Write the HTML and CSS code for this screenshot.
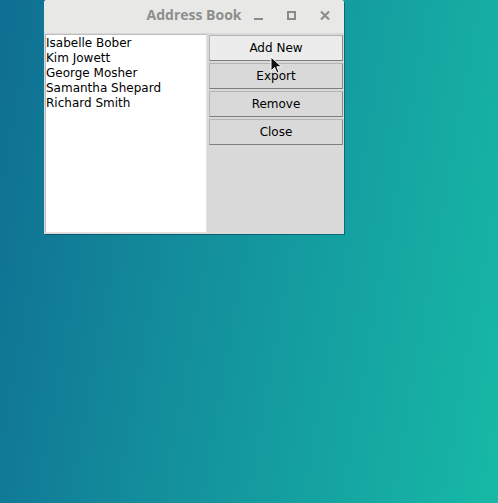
FILE: index.html
```html
<!DOCTYPE html>
<html>
<head>
<meta charset="utf-8">
<link rel="stylesheet" href="styles.css">
</head>
<body>
<div class="desktop">
  <div class="window">
    <div class="titlebar">
      <div></div>
      <div class="title">Address Book</div>
      <div class="controls">
        <svg class="ctl" width="12" height="12" viewBox="0 0 12 12"><rect x="1" y="8" width="9" height="2" fill="#8a8a8a"/></svg>
        <svg class="ctl" width="12" height="12" viewBox="0 0 12 12"><rect x="2" y="2" width="7" height="7" fill="none" stroke="#8a8a8a" stroke-width="2"/></svg>
        <svg class="ctl" width="12" height="12" viewBox="0 0 12 12"><path d="M2 1.5 L10 9.5 M10 1.5 L2 9.5" stroke="#8a8a8a" stroke-width="2"/></svg>
      </div>
    </div>
    <div class="content">
      <ul class="listbox">
        <li>Isabelle Bober</li>
        <li>Kim Jowett</li>
        <li>George Mosher</li>
        <li>Samantha Shepard</li>
        <li>Richard Smith</li>
      </ul>
      <div class="buttons">
        <button class="btn hover">Add New</button>
        <button class="btn">Export</button>
        <button class="btn">Remove</button>
        <button class="btn">Close</button>
      </div>
    </div>
  </div>
  <svg class="cursor" width="14" height="20" viewBox="0 0 14 20"><path d="M1 1 L1 15 L4.5 11.5 L7 17 L9 16 L6.8 10.8 L11.5 10.8 Z" fill="#111" stroke="#fff" stroke-width="1"/></svg>
</div>
</body>
</html>
```
FILE: styles.css
```css
html, body {
  margin: 0;
  padding: 0;
}
.desktop {
  position: relative;
  width: 498px;
  height: 503px;
  background: linear-gradient(100deg, #0f6e92 0%, #138e9c 40%, #15a7a2 75%, #17b9a6 100%);
  overflow: hidden;
}
.window {
  margin-left: 44px;
  width: 300px;
  height: 234px;
  background: #d9d9d9;
  display: flex;
  flex-direction: column;
  box-shadow: 1px 1px 0 rgba(0, 40, 60, 0.45);
  border-radius: 3px 3px 0 0;
}
.titlebar {
  height: 33px;
  background: #e8e8e7;
  display: grid;
  grid-template-columns: 1fr auto 1fr;
  align-items: center;
  border-radius: 3px 3px 0 0;
}
.title {
  font-family: "Open Sans", sans-serif;
  font-weight: 700;
  font-size: 14px;
  color: #8e8e8e;
  padding-bottom: 4px;
}
.controls {
  display: flex;
  justify-content: flex-end;
  align-items: center;
  gap: 21px;
  padding-right: 13px;
  padding-bottom: 2px;
}
.ctl {
  display: block;
}
.content {
  flex: 1;
  display: grid;
  grid-template-columns: 162px 1fr;
  gap: 2px;
  padding: 1px 1px 1px 1px;
}
.listbox {
  list-style: none;
  margin: 0;
  padding: 1px 0 0 0;
  background: #fff;
  border: 1px solid #bdbdbd;
  border-right-color: #e2e2e2;
  border-bottom-color: #e2e2e2;
  font-family: "DejaVu Sans", sans-serif;
  font-size: 12px;
  line-height: 15px;
  color: #000;
}
.buttons {
  display: flex;
  flex-direction: column;
  gap: 2px;
  padding-top: 1px;
}
.btn {
  height: 26px;
  margin: 0;
  padding: 0;
  background: #d9d9d9;
  border: 1px solid #b4b4b4;
  border-right-color: #8a8a8a;
  border-bottom-color: #7f7f7f;
  font-family: "DejaVu Sans", sans-serif;
  font-size: 12px;
  color: #000;
  text-align: center;
}
.btn.hover {
  background: #ececec;
}
.cursor {
  position: absolute;
  left: 270px;
  top: 56px;
}
```
